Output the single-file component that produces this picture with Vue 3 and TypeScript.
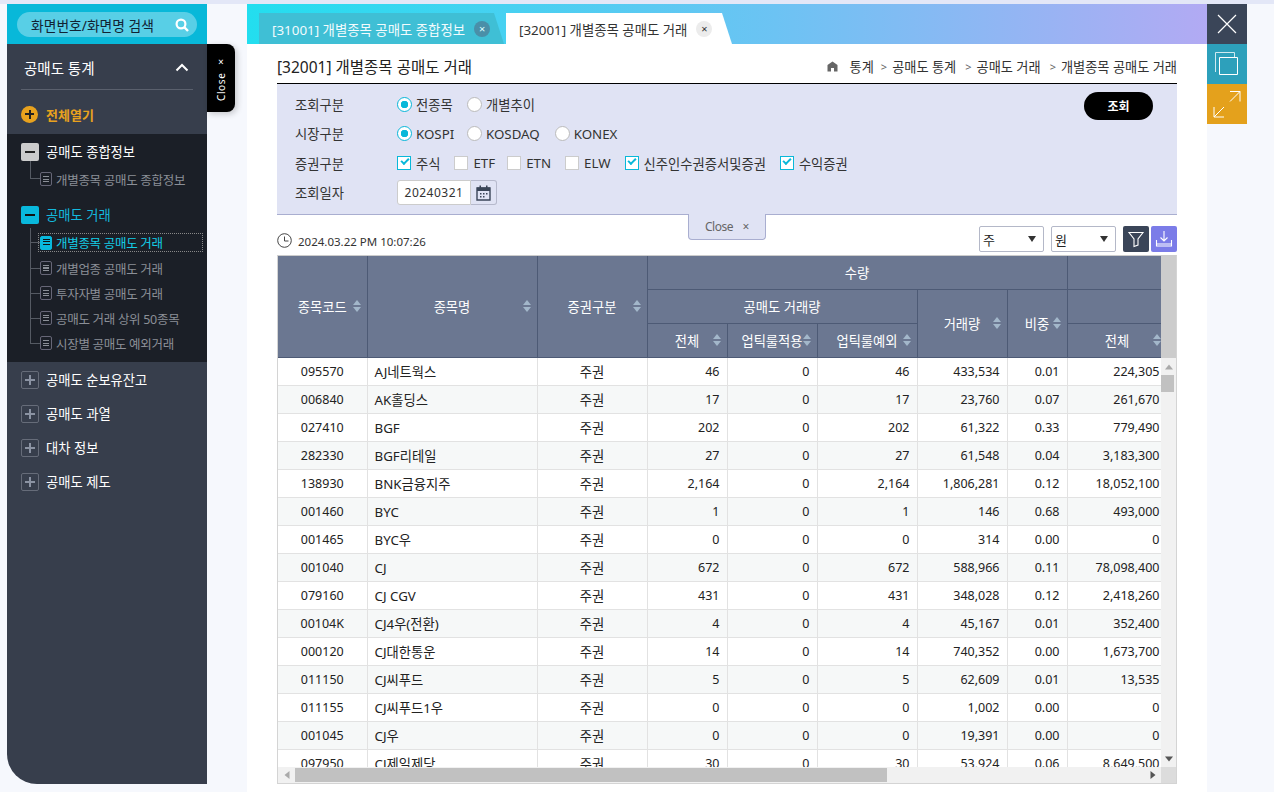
<script setup lang="ts">
const rows: string[][] = [
  ['095570','AJ네트웍스','46','0','46','433,534','0.01','224,305'],
  ['006840','AK홀딩스','17','0','17','23,760','0.07','261,670'],
  ['027410','BGF','202','0','202','61,322','0.33','779,490'],
  ['282330','BGF리테일','27','0','27','61,548','0.04','3,183,300'],
  ['138930','BNK금융지주','2,164','0','2,164','1,806,281','0.12','18,052,100'],
  ['001460','BYC','1','0','1','146','0.68','493,000'],
  ['001465','BYC우','0','0','0','314','0.00','0'],
  ['001040','CJ','672','0','672','588,966','0.11','78,098,400'],
  ['079160','CJ CGV','431','0','431','348,028','0.12','2,418,260'],
  ['00104K','CJ4우(전환)','4','0','4','45,167','0.01','352,400'],
  ['000120','CJ대한통운','14','0','14','740,352','0.00','1,673,700'],
  ['011150','CJ씨푸드','5','0','5','62,609','0.01','13,535'],
  ['011155','CJ씨푸드1우','0','0','0','1,002','0.00','0'],
  ['001045','CJ우','0','0','0','19,391','0.00','0'],
  ['097950','CJ제일제당','30','0','30','53,924','0.06','8,649,500'],
]
const subs = ['개별업종 공매도 거래','투자자별 공매도 거래','공매도 거래 상위 50종목','시장별 공매도 예외거래']
const closed = ['공매도 순보유잔고','공매도 과열','대차 정보','공매도 제도']
const widths = [89,170,110,80,90,100,90,60,100]
</script>

<template>
  <div class="page">
    <aside class="side">
      <div class="search">
        <div class="pill"><span>화면번호/화면명 검색</span>
          <svg width="14" height="14" viewBox="0 0 14 14"><circle cx="6" cy="6" r="4.4" fill="none" stroke="#fff" stroke-width="2.2"/><path d="M9.2 9.2 13 13" stroke="#fff" stroke-width="2.4"/></svg>
        </div>
      </div>
      <button class="side-close">Close ×</button>
      <div class="side-top">
        <div class="side-title"><span>공매도 통계</span>
          <svg width="14" height="9" viewBox="0 0 14 9"><path d="M1.5 7.5 7 2l5.5 5.5" fill="none" stroke="#fff" stroke-width="2"/></svg>
        </div>
        <div class="open-all"><i class="plus-o"></i><span>전체열기</span></div>
      </div>
      <div class="tree-dark">
        <div class="node"><i class="box light"></i><span>공매도 종합정보</span></div>
        <div class="subs one">
          <div class="sub"><i class="doc"></i><span>개별종목 공매도 종합정보</span></div>
        </div>
        <div class="node act second"><i class="box cyan"></i><span>공매도 거래</span></div>
        <div class="subs">
          <div class="sub cur"><i class="doc on"></i><span>개별종목 공매도 거래</span></div>
          <div class="sub" v-for="s in subs" :key="s"><i class="doc"></i><span>{{ s }}</span></div>
        </div>
      </div>
      <div class="tree-rest">
        <div class="node rest" v-for="c in closed" :key="c"><i class="box plus"></i><span>{{ c }}</span></div>
      </div>
    </aside>

    <main class="main">
      <div class="tabs">
        <div class="tab off"><span>[31001] 개별종목 공매도 종합정보</span><b class="x dark">×</b></div>
        <div class="tab on"><span>[32001] 개별종목 공매도 거래</span><b class="x">×</b></div>
      </div>
      <div class="content">
        <div class="head">
          <h1>[32001] 개별종목 공매도 거래</h1>
          <nav>
            <svg class="home" width="11" height="11" viewBox="0 0 11 11"><path d="M5.5.5 10.5 4v6.500H7V7H4v3.500H.5V4z" fill="#666"/></svg>
            <span>통계</span><em>&gt;</em><span>공매도 통계</span><em>&gt;</em><span>공매도 거래</span><em>&gt;</em><span>개별종목 공매도 거래</span>
          </nav>
        </div>
        <section class="filter">
          <button class="go">조회</button>
          <button class="fold">Close <span>×</span></button>
          <div class="frow"><label>조회구분</label>
            <span class="opt r1"><i class="radio sel"></i>전종목</span>
            <span class="opt"><i class="radio"></i>개별추이</span>
          </div>
          <div class="frow"><label>시장구분</label>
            <span class="opt r1"><i class="radio sel"></i>KOSPI</span>
            <span class="opt r2"><i class="radio"></i>KOSDAQ</span>
            <span class="opt"><i class="radio"></i>KONEX</span>
          </div>
          <div class="frow chk"><label>증권구분</label>
            <span class="opt"><i class="cb sel"></i>주식</span>
            <span class="opt etf"><i class="cb"></i>ETF</span>
            <span class="opt"><i class="cb"></i>ETN</span>
            <span class="opt"><i class="cb"></i>ELW</span>
            <span class="opt"><i class="cb sel"></i>신주인수권증서및증권</span>
            <span class="opt"><i class="cb sel"></i>수익증권</span>
          </div>
          <div class="frow"><label>조회일자</label>
            <span class="date">20240321</span>
            <span class="cal"><svg width="15" height="16" viewBox="0 0 15 16"><path d="M1 3h13v12H1z" fill="none" stroke="#3a4558" stroke-width="1.400"/><path d="M1 2.500h13V6H1zM3.500.5h1.500V3H3.500zM10 .5h1.500V3H10z" fill="#3a4558"/><path d="M4 8h1.500v1.500H4zM7 8h1.500v1.500H7zM10 8h1.500v1.500H10zM4 11h1.500v1.500H4zM7 11h1.500v1.500H7z" fill="#3a4558"/></svg></span>
          </div>
        </section>
        <div class="tools">
          <svg class="clock" width="15" height="15" viewBox="0 0 15 15"><circle cx="7.500" cy="7.500" r="6.800" fill="none" stroke="#444" stroke-width="1"/><path d="M7.500 3.500v4.500h4" fill="none" stroke="#444" stroke-width="1"/></svg>
          <span class="time">2024.03.22 PM 10:07:26</span>
          <span class="grow"></span>
          <span class="sel-box"><span>주</span><i></i></span>
          <span class="sel-box"><span>원</span><i></i></span>
          <span class="ic navy"><svg width="18" height="18" viewBox="0 0 18 18"><path d="M2 2.500h14L11 9v6l-4 1.500V9z" fill="none" stroke="#fff" stroke-width="1.100"/></svg></span>
          <span class="ic violet"><svg width="18" height="18" viewBox="0 0 18 18"><path d="M9 1v10M5.500 7.500 9 11l3.500-3.500M1.500 10v6h15v-6M1.500 14h15" fill="none" stroke="#fff" stroke-width="1.100"/></svg></span>
        </div>
        <div class="grid">
          <div class="grid-view">
            <table>
              <colgroup><col v-for="(w,i) in widths" :key="i" :style="{ width: w + 'px' }"></colgroup>
              <thead>
                <tr class="top">
                  <th rowspan="3">종목코드<i class="sort"></i></th>
                  <th rowspan="3">종목명<i class="sort"></i></th>
                  <th rowspan="3">증권구분<i class="sort"></i></th>
                  <th colspan="5">수량</th>
                  <th></th>
                </tr>
                <tr>
                  <th colspan="3">공매도 거래량</th>
                  <th rowspan="2">거래량<i class="sort"></i></th>
                  <th rowspan="2">비중<i class="sort"></i></th>
                  <th></th>
                </tr>
                <tr>
                  <th>전체<i class="sort"></i></th>
                  <th>업틱룰적용<i class="sort"></i></th>
                  <th>업틱룰예외<i class="sort"></i></th>
                  <th>전체<i class="sort"></i></th>
                </tr>
              </thead>
              <tbody>
                <tr v-for="r in rows" :key="r[0]">
                  <td class="c">{{ r[0] }}</td>
                  <td class="l">{{ r[1] }}</td>
                  <td class="c k">주권</td>
                  <td v-for="(v,i) in r.slice(2)" :key="i" class="n">{{ v }}</td>
                </tr>
              </tbody>
            </table>
          </div>
          <div class="vbar">
            <div class="vhead"></div>
            <div class="arr up"></div>
            <div class="vthumb"></div>
            <span class="grow"></span>
            <div class="arr down"></div>
          </div>
          <div class="hbar">
            <div class="arr left"></div>
            <div class="hthumb"></div>
            <span class="grow"></span>
            <div class="arr right"></div>
          </div>
          <div class="corner"></div>
        </div>
      </div>
    </main>

    <div class="actions">
      <span class="a1"><svg width="20" height="20" viewBox="0 0 20 20"><path d="M1 1 19 19M19 1 1 19" stroke="#fff" stroke-width="1.200"/></svg></span>
      <span class="a2"><svg width="24" height="24" viewBox="0 0 24 24"><path d="M.5 20V.5H19.500V5" fill="none" stroke="#cfeaf0" stroke-width="1"/><path d="M4.500 5.500h18v17h-18z" fill="none" stroke="#fff" stroke-width="1"/></svg></span>
      <span class="a3"><svg width="28" height="28" viewBox="0 0 28 28"><path d="M17 1.500h10v10M27 1.500 17 11.500M1 17v10h10M1 27 11 17" fill="none" stroke="#fff" stroke-width="1"/></svg></span>
    </div>
  </div>
</template>

<style>
html, body { margin: 0; background: #f6f8fd; overflow: hidden; }
</style>

<style scoped>
.page {
  width: 1274px; height: 792px; box-sizing: border-box; overflow: hidden;
  display: flex; align-items: flex-start; padding: 4px 0 0 7px;
  position: relative; background: #f6f8fd;
  font-family: "Noto Sans", "Noto Sans CJK KR", sans-serif;
  font-size: 12px; color: #222;
}
.page::before { content: ""; position: absolute; left: 0; top: 0; width: 100%; height: 4px; background: #e3e7f7; }
i { display: block; font-style: normal; flex: none; }
button { font-family: inherit; border: 0; padding: 0; }

.side { width: 200px; height: 780px; flex: none; background: #373e4c; border-bottom-left-radius: 30px; position: relative; margin-right: 40px; }
.search { height: 40px; box-sizing: border-box; padding: 8px 10px 7px; background: #08b8d9; }
.pill { height: 25px; border-radius: 13px; background: #58cfe6; display: flex; align-items: center; justify-content: space-between; padding: 0 8px 0 14px; font-size: 13.800px; color: #123; }
.side-close { position: absolute; left: 200px; top: 40px; width: 28px; height: 68px; background: #000; color: #fff; font-size: 10px; letter-spacing: .6px; writing-mode: vertical-rl; rotate: 180deg; border-radius: 8px 0 0 8px; box-shadow: -2px -2px 6px rgba(0,0,0,.2); }
.side-top { height: 90px; box-sizing: border-box; padding: 0 14px; }
.side-title { height: 46px; box-sizing: border-box; padding: 2px 4px 0 3px; display: flex; align-items: center; justify-content: space-between; border-bottom: 1px solid #5a606d; color: #fff; font-size: 14.500px; }
.open-all { display: flex; align-items: center; gap: 8px; height: 44px; margin-top: 2px; color: #e8a21e; font-size: 13px; font-weight: 700; }
.plus-o { width: 17px; height: 17px; border-radius: 50%; background: linear-gradient(#222,#222) center/9px 2px no-repeat, linear-gradient(#222,#222) center/2px 9px no-repeat, #e8a21e; }
.tree-dark { height: 228px; background: #1b1f27; padding: 0 0 0 14px; box-sizing: border-box; }
.node { display: flex; align-items: center; gap: 7px; color: #fff; font-size: 13.300px; height: 34px; padding-top: 1px; box-sizing: border-box; }
.node.second { margin-top: 5px; color: #13b9de; }
.box { width: 18px; height: 18px; border-radius: 2px; box-sizing: border-box; }
.box.light { background: linear-gradient(#222,#222) center/10px 2px no-repeat, #ccc; }
.box.cyan { background: linear-gradient(#111,#111) center/10px 2px no-repeat, #09b8dc; }
.box.plus { border: 1px solid #666c79; background: linear-gradient(#8b93a3,#8b93a3) center/10px 2px no-repeat, linear-gradient(#8b93a3,#8b93a3) center/2px 10px no-repeat; }
.subs { position: relative; margin-top: -1px; padding-left: 19px; }
.subs.one { margin-top: -2px; }
.subs::before { content: ""; position: absolute; left: 9px; top: -7px; bottom: 12px; width: 1px; background: #555a63; }
.subs.one::before { top: -5px; bottom: 13px; }
.sub { height: 25px; display: flex; align-items: center; gap: 4px; color: #8b8f97; font-size: 12.500px; letter-spacing: -0.3px; position: relative; }
.sub::before { content: ""; position: absolute; left: -10px; top: 12px; width: 10px; height: 1px; background: #555a63; }
.subs.one .sub { height: 26px; }
.cur { color: #13cde8; height: 15px; margin: 5px 6px 5.500px 0; outline: 1px dotted #888; outline-offset: 1px; }
.cur::before { top: 7px; }
.doc { width: 10px; height: 12px; border: 1px solid #667; border-radius: 2px; background: repeating-linear-gradient(#8b8f97 0 1px, transparent 1px 2.500px) center/6px 7px no-repeat; box-sizing: content-box; }
.doc.on { background: repeating-linear-gradient(#111 0 1px, transparent 1px 2.500px) center/7px 7px no-repeat, #09b8dc; border-color: #09b8dc; }
.tree-rest { padding: 0 14px; }

.main { width: 960px; height: 788px; flex: none; background: #fff; }
.tabs { height: 40px; display: flex; align-items: flex-end; box-sizing: border-box; padding-left: 12px; gap: 2px; background: linear-gradient(90deg, #23deef 0%, #6cc3f3 55%, #b2aaf3 100%); }
.tab { height: 31px; display: flex; align-items: center; font-size: 13.400px; padding-left: 13px; box-sizing: border-box; clip-path: polygon(0 0, calc(100% - 10px) 0, 100% 100%, 0 100%); }
.tab.off { width: 245px; background: #3fbfd5; color: #f2fbfd; }
.tab.on { width: 226px; background: #fff; color: #333; }
.x { width: 16px; height: 16px; border-radius: 50%; background: #ececec; color: #333; font-weight: 400; font-size: 11px; line-height: 15px; text-align: center; margin-left: 9px; }
.x.dark { background: #4a8fa8; color: #dff; }
.content { width: 900px; margin-left: 30px; }
.head { height: 40px; box-sizing: border-box; border-bottom: 1px solid #000; display: flex; justify-content: space-between; align-items: center; padding-top: 5px; }
h1 { margin: 0; font-size: 15.500px; font-weight: 400; color: #222; }
nav { display: flex; align-items: center; color: #333; font-size: 13.200px; }
nav em { font-style: normal; color: #666; margin: 0 5px 0 9px; font-size: 11px; }
nav em:first-of-type { margin-left: 7px; }
.home { margin-right: 12px; }
.filter { height: 131px; box-sizing: border-box; background: #e0e3f4; border-bottom: 1px solid #a9aed0; position: relative; padding: 6px 0 0 18px; }
.go { position: absolute; right: 24px; top: 8px; width: 69px; height: 28px; border-radius: 14px; background: #000; color: #fff; font-weight: 700; font-size: 12px; }
.fold { position: absolute; left: 411px; top: 130px; width: 78px; height: 26px; box-sizing: border-box; background: #e0e3f4; border: 1px solid #a9aed0; border-top: 0; border-radius: 0 0 4px 4px; color: #666; font-size: 12px; z-index: 2; letter-spacing: -0.5px; }
.fold span { margin-left: 7px; }
.frow { height: 29.300px; display: flex; align-items: center; color: #333; }
.frow label { width: 102px; font-size: 13.300px; }
.opt { display: flex; align-items: center; gap: 4px; font-size: 13.300px; margin-right: 14px; color: #333; white-space: nowrap; }
.opt.r1 { width: 66px; margin-right: 4px; }
.opt.r2 { margin-right: 15px; }
.radio { width: 13px; height: 13px; border-radius: 50%; background: #fff; border: 1px solid #bbb; box-sizing: content-box; }
.radio.sel { border-color: #09b8d9; background: radial-gradient(circle, #09b8d9 0 3.500px, #fff 4px); }
.frow.chk .opt { gap: 5px; }
.frow.chk .opt.etf { margin-right: 12px; }
.cb { width: 12px; height: 12px; background: #fff; border: 1px solid #ccc; }
.cb.sel { border-color: #09b8d9; position: relative; }
.cb.sel::after { content: ""; position: absolute; left: 2.500px; top: 1px; width: 6px; height: 3px; transform: rotate(-45deg); border-left: 2px solid #09b8d9; border-bottom: 2px solid #09b8d9; }
.date { width: 74px; height: 25px; box-sizing: border-box; background: #fff; border: 1px solid #ccc; border-radius: 3px 0 0 3px; display: flex; align-items: center; justify-content: center; font-size: 12px; letter-spacing: .5px; }
.cal { width: 26px; height: 25px; box-sizing: border-box; border: 1px solid #b6b9cc; border-left: 0; border-radius: 0 3px 3px 0; display: flex; align-items: center; justify-content: center; }
.tools { height: 40px; display: flex; align-items: center; box-sizing: border-box; padding-top: 8px; }
.clock { margin-top: 3px; }
.time { margin-left: 6px; font-size: 11.500px; color: #333; padding-top: 4px; }
.grow { flex: 1; }
.sel-box { width: 65px; height: 26px; box-sizing: border-box; border: 1px solid #b4b8c8; border-radius: 2px; display: flex; align-items: center; justify-content: space-between; padding: 0 7px 0 3px; margin-right: 7px; font-size: 13px; }
.sel-box i { width: 0; height: 0; border-style: solid; border-color: #333 transparent transparent; border-width: 6px 4.500px 0; }
.ic { width: 26px; height: 26px; display: flex; align-items: center; justify-content: center; border-radius: 2px; }
.navy { background: #3a4558; margin-right: 2px; }
.violet { background: #7b7ce8; }
.grid { width: 900px; height: 529px; box-sizing: border-box; border: 1px solid #d4d4d4; border-top: 1px solid #ccc; display: grid; grid-template-columns: 883px 15px; grid-template-rows: 511px 16px; background: #fff; }
.grid-view { overflow: hidden; }
table { border-collapse: collapse; table-layout: fixed; width: 889px; }
th { height: 34px; box-sizing: border-box; background: #6b7791; border: 1px solid #4d5a75; border-top: 0; border-left: 0; color: #fff; font-weight: 400; font-size: 13.300px; padding: 0; position: relative; white-space: nowrap; }
.top th { height: 33px; }
.sort { position: absolute; right: 6px; top: 50%; margin-top: -6px; width: 8px; height: 12px; }
.sort::before, .sort::after { content: ""; position: absolute; left: 0; border-left: 4px solid transparent; border-right: 4px solid transparent; }
.sort::before { top: 0; border-bottom: 5px solid #a3b7ca; }
.sort::after { bottom: 0; border-top: 5px solid #a3b7ca; }
td { height: 28px; box-sizing: border-box; border: 1px solid #e2e2e2; border-top: 0; border-left: 0; padding: 1px 7px 0; font-size: 12.500px; color: #222; white-space: nowrap; }
tbody tr:nth-child(even) td { background: #f6f8f8; }
.c { text-align: center; }
.l { text-align: left; font-size: 13.300px; }
.k { font-size: 13.300px; }
.n { text-align: right; }
.vbar { display: flex; flex-direction: column; background: #f1f1f1; }
.vhead { height: 102px; background: #ccc; }
.arr { position: relative; flex: none; }
.arr::after { content: ""; position: absolute; left: 50%; top: 50%; transform: translate(-50%,-50%); border-style: solid; }
.up, .down { height: 17px; }
.up::after { border-color: transparent transparent #aaa; border-width: 0 4px 5px; }
.down::after { border-color: #555 transparent transparent; border-width: 5px 4px 0; }
.vthumb { height: 17px; background: #c1c1c1; margin: 0 2px 0 0; }
.hbar { display: flex; background: #f1f1f1; align-items: stretch; }
.left, .right { width: 17px; }
.left::after { border-color: transparent #aaa transparent transparent; border-width: 4px 5px 4px 0; }
.right::after { border-color: transparent transparent transparent #555; border-width: 4px 0 4px 5px; }
.hthumb { width: 592px; background: #c1c1c1; margin: 1px 0; }
.corner { background: #dcdcdc; }

.actions { width: 40px; flex: none; display: flex; flex-direction: column; }
.actions span { height: 40px; display: flex; align-items: center; justify-content: center; }
.a1 { background: #3a4558; }
.a2 { background: #2da0bb; }
.a3 { background: #e4a11c; }
</style>
